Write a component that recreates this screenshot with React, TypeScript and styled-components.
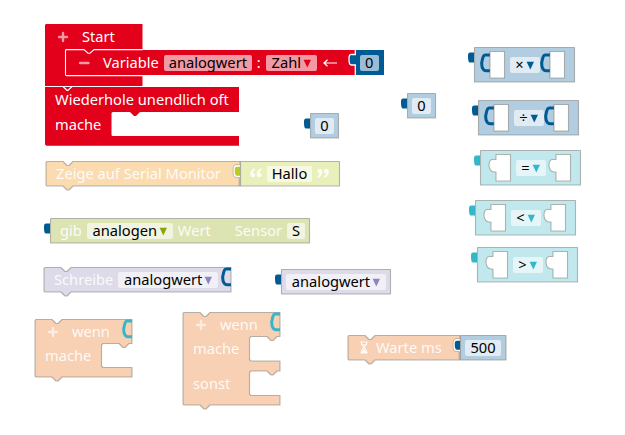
import React from 'react';
import styled, { createGlobalStyle } from 'styled-components';

const color = {
  red: '#e2001a',
  number: '#005a94',
  numberSoft: '#b2cce0',
  logic: '#33b8ca',
  logicSoft: '#c1e9ed',
  lime: '#bacc1e',
  action: '#fbdcb1',
  text: '#eaf0bc',
  sensor: '#dde4b3',
  variable: '#dddae9',
  control: '#f8d0b4',
};

const Global = createGlobalStyle`
  body { margin: 0; background: #fff; }
`;

const Canvas = styled.main`
  position: relative;
  width: 625px;
  height: 435px;
  overflow: hidden;
  background: #fff;
  font-family: 'Noto Sans', sans-serif;
  font-size: 14.67px;
  line-height: 20px;
`;

const BlockBox = styled.section<{ $x: number; $y: number }>`
  position: absolute;
  left: ${p => p.$x}px;
  top: ${p => p.$y}px;
`;

const Silhouette = styled.svg`
  position: absolute;
  left: 0;
  top: 0;
  width: 1px;
  height: 1px;
  overflow: visible;
`;

const Row = styled.div<{ $h?: number; $top?: number }>`
  position: relative;
  display: flex;
  align-items: center;
  height: ${p => p.$h ?? 25}px;
  margin-top: ${p => p.$top ?? 0}px;
  white-space: nowrap;
`;

const Label = styled.span<{ $gap?: number; $faded?: boolean }>`
  margin-left: ${p => p.$gap ?? 10}px;
  padding-bottom: 2px;
  color: ${p => (p.$faded ? 'rgba(255,255,255,.9)' : '#fff')};
`;

const Field = styled.span<{ $gap?: number; $w: number }>`
  display: flex;
  align-items: center;
  justify-content: center;
  gap: 2px;
  flex: none;
  box-sizing: border-box;
  width: ${p => p.$w}px;
  height: 16px;
  margin-left: ${p => p.$gap ?? 5}px;
  border-radius: 2px;
  background: rgba(255, 255, 255, 0.6);
  color: #000;
`;

const FieldText = styled.span`
  padding-bottom: 2px;
`;

const Glyph = styled.svg<{ $gap?: number }>`
  flex: none;
  margin-left: ${p => p.$gap ?? 0}px;
  overflow: visible;
`;

const Caret = ({ fill }: { fill: string }) => (
  <Glyph width="8" height="8" fill={fill}><path d="M.6 .8h7.400L4.300 8.600z" /></Glyph>
);
const Plus = ({ gap }: { gap: number }) => (
  <Glyph $gap={gap} width="10" height="10" stroke="#fff" strokeOpacity=".6" strokeWidth="2.4" strokeLinecap="round">
    <path d="M1 5h8M5 1v8" />
  </Glyph>
);
const Minus = ({ gap }: { gap: number }) => (
  <Glyph $gap={gap} width="10" height="10" stroke="#fff" strokeOpacity=".6" strokeWidth="2.4" strokeLinecap="round">
    <path d="M1 5h8.500" />
  </Glyph>
);
const Arrow = ({ gap }: { gap: number }) => (
  <Glyph $gap={gap} width="14" height="8" fill="none" stroke="#fff" strokeWidth="1.2">
    <path d="M14 4H1M4.5 .8L1 4l3.5 3.2" />
  </Glyph>
);
const Quote = ({ gap, closing }: { gap: number; closing?: boolean }) => (
  <Glyph $gap={gap} width="12" height="16" fill="#fff" fillOpacity=".85">
    <g transform={closing ? 'rotate(180 6 7)' : undefined}>
      <path d="M4.8 2.2C2.2 2.8 .2 5.2 .2 8.1c0 2 1 3.2 2.6 3.2 1.3 0 2.3-.9 2.3-2.2S4.200 7 3 6.900c.1-1.600 1-2.800 2.300-3.500z" />
      <path d="M11.300 2.200C8.700 2.800 6.700 5.200 6.700 8.100c0 2 1 3.200 2.600 3.200 1.300 0 2.300-.9 2.300-2.200S10.700 7 9.500 6.900c.1-1.600 1-2.800 2.300-3.500z" />
    </g>
  </Glyph>
);
const Hourglass = ({ gap }: { gap: number }) => (
  <Glyph $gap={gap} width="8" height="13" fill="none" stroke="#fff" strokeOpacity=".85" strokeWidth="1.2">
    <path d="M.3 1h7.400M.3 12h7.400M1.500 1v2.200L4 6.500 6.500 3.200V1M1.500 12V9.800L4 6.500l2.500 3.300V12" />
    <path d="M2 11.500h4L4 9z M2.600 3.700h2.800" fill="#fff" />
  </Glyph>
);

const NOTCH = 'H17l4 4h2l4 -4';
const TAB = 'H27l-4 4h-2l-4 -4';

const Tab = ({ fill }: { fill: string }) => (
  <path fill={fill} d="M0 5.500H-3.500Q-6 5 -6 8V10Q-6 15.500 -4 15.500H0z" />
);
const Hook = ({ x, stroke, y = 0 }: { x: number; y?: number; stroke: string }) => (
  <path transform={`translate(${x} ${y})`} d="M0 2H-4.500C-6.500 2 -6.300 2.600 -7.400 5.500C-9.400 11.500 -8.200 17.700 -3.500 17.700H0" fill="none" stroke={stroke} strokeWidth="3" />
);
const Outline = ({ d, fill }: { d: string; fill: string }) => (
  <path d={d} fill={fill} fillRule="evenodd" stroke="#7d7d78" strokeOpacity=".55" strokeWidth="1.100" strokeLinejoin="round" />
);

type ValueProps = { x: number; y: number; w: number; h?: number; fill: string; tab?: string; children: React.ReactNode };
const ValueBlock = ({ x, y, w, h = 25, fill, tab, children }: ValueProps) => (
  <BlockBox $x={x} $y={y}>
    <Silhouette>
      {tab && <Tab fill={tab} />}
      <Outline fill={fill} d={`M.5 .5H${w - 0.5}V${h}H.5z`} />
    </Silhouette>
    <Row $h={h}>{children}</Row>
  </BlockBox>
);

const OperatorBlock = ({ x, y, sign, logic }: { x: number; y: number; sign: string; logic?: boolean }) => {
  const strong = logic ? color.logic : color.number;
  const socket = (left: number) =>
    logic
      ? `M${left} 4.500h14.500v26.500h-14.500v-9C${left - 8.5} 23 ${left - 8.5} 10 ${left - 4} 9.500H${left}z`
      : `M${left} 4.500h14.500v26.500h-14.500z`;
  return (
    <BlockBox $x={x} $y={y}>
      <Silhouette>
        <Tab fill={strong} />
        <Outline fill={logic ? color.logicSoft : color.numberSoft} d="M.5 .5H100.500V35H.5z" />
        {[16, 76].map(left => (
          <React.Fragment key={left}>
            {!logic && <Hook x={left} y={6} stroke={strong} />}
            <Outline fill="#fff" d={socket(left)} />
          </React.Fragment>
        ))}
      </Silhouette>
      <Row $h={35}>
        <Field $gap={35.5} $w={30}><FieldText>{sign}</FieldText><Caret fill={strong} /></Field>
      </Row>
    </BlockBox>
  );
};

export default function App() {
  return (
    <>
      <Global />
      <Canvas>
        <BlockBox $x={45} $y={24}>
          <Silhouette>
            <path fill={color.red} d="M1 0H97.500V62H0V1z" />
          </Silhouette>
          <Row $h={26}><Plus gap={13} /><Label $gap={14}>Start</Label></Row>
        </BlockBox>

        <BlockBox $x={66} $y={50}>
          <Silhouette>
            <path fill={color.red} d="M0 0H290V25H0z" />
            <path fill="none" stroke="#fff" strokeWidth="1.100" d="M77 25.600H.5Q-.5 25.600 -.5 24.500V.5Q-.5 -.4 .5 -.4H18l4 3.600h2l4 -3.600H77" />
            <path fill={color.number} stroke="#fff" strokeWidth="1.300" d="M289.300 -.5V4.500H286Q283 4 283 8V10Q283 15 285.500 15H289.300V25.500" />
            <path fill={color.number} d="M290 0H318V25H290z" />
          </Silhouette>
          <Row>
            <Minus gap={13} />
            <Label $gap={14}>Variable</Label>
            <Field $w={88}><FieldText>analogwert</FieldText></Field>
            <Label $gap={5}>:</Label>
            <Field $w={51}><FieldText>Zahl</FieldText><Caret fill={color.red} /></Field>
            <Arrow gap={6} />
            <Field $gap={23} $w={19}><FieldText>0</FieldText></Field>
          </Row>
        </BlockBox>

        <BlockBox $x={45} $y={87}>
          <Silhouette>
            <path fill={color.red} d="M0 0H194V25H95l-4 4h-2l-4 -4H68Q66.500 25 66.500 26.500V47.500Q66.500 49 68 49H194V58.700H1.500L0 57.500z" />
            <path fill="none" stroke="#fff" strokeWidth="1.200" d="M0 -.5H18l4 3.800h1l4 -3.800H97.500" />
          </Silhouette>
          <Row $h={25}><Label>Wiederhole unendlich oft</Label></Row>
          <Row $h={25}><Label>mache</Label></Row>
        </BlockBox>

        <ValueBlock x={310} y={113} w={29} fill={color.numberSoft} tab={color.number}><Field $w={19}><FieldText>0</FieldText></Field></ValueBlock>
        <ValueBlock x={407} y={93} w={29} fill={color.numberSoft} tab={color.number}><Field $w={19}><FieldText>0</FieldText></Field></ValueBlock>

        <BlockBox $x={46} $y={161}>
          <Silhouette>
            <Outline fill={color.action} d={`M1 .5${NOTCH}H194V25${TAB}H1L0 24V1.500z`} />
            <path fill={color.lime} stroke="#fff" strokeWidth="1.500" d="M194 5H191Q188 5 188 8V10Q188 15.500 191 15.500H194" />
            <path fill="none" stroke="#888" strokeOpacity=".6" strokeWidth=".7" d="M193 3.500H190Q187 4 187 8V10Q187 16.500 190 16.500H193V25" />
          </Silhouette>
          <Row><Label $faded>Zeige auf Serial Monitor</Label></Row>
        </BlockBox>
        <ValueBlock x={240} y={161} w={100} fill={color.text}>
          <Quote gap={10} />
          <Field $w={45}><FieldText>Hallo</FieldText></Field>
          <Quote gap={5} closing />
        </ValueBlock>

        <ValueBlock x={50} y={218} w={260} fill={color.sensor} tab={color.number}>
          <Label $faded>gib</Label>
          <Field $w={86}><FieldText>analogen</FieldText><Caret fill="#8fa402" /></Field>
          <Label $gap={5} $faded>Wert</Label>
          <Label $gap={24} $faded>Sensor</Label>
          <Field $w={18}><FieldText>S</FieldText></Field>
        </ValueBlock>

        <BlockBox $x={44} $y={267}>
          <Silhouette>
            <Outline fill={color.variable} d={`M1 .5${NOTCH}H187V25${TAB}H1L0 24V1.500z`} />
            <Hook x={187} stroke={color.number} />
          </Silhouette>
          <Row><Label $faded>Schreibe</Label><Field $w={100}><FieldText>analogwert</FieldText><Caret fill="#9085ba" /></Field></Row>
        </BlockBox>
        <ValueBlock x={281} y={269} w={110} fill={color.variable} tab={color.number}>
          <Field $w={100}><FieldText>analogwert</FieldText><Caret fill="#9085ba" /></Field>
        </ValueBlock>

        <BlockBox $x={35} $y={319}>
          <Silhouette>
            <Outline fill={color.control} d={`M1 .5${NOTCH}H97V24.500H94l-4 4h-2l-4 -4H68L66.500 26V47L68 48.500H97V58${TAB}H1L0 57V1.500z`} />
            <Hook x={97} stroke={color.logic} />
          </Silhouette>
          <Row><Plus gap={13} /><Label $gap={14} $faded>wenn</Label></Row>
          <Row $h={24}><Label $faded>mache</Label></Row>
        </BlockBox>

        <BlockBox $x={183} $y={312}>
          <Silhouette>
            <Outline fill={color.control} d={`M1 .5${NOTCH}H97V24.500H94l-4 4h-2l-4 -4H68L66.500 26V47.500L68 49H97V59H94l-4 4h-2l-4 -4H68L66.500 60.500V82L68 83.500H97V93${TAB}H1L0 92V1.500z`} />
            <Hook x={97} stroke={color.logic} />
          </Silhouette>
          <Row><Plus gap={13} /><Label $gap={14} $faded>wenn</Label></Row>
          <Row $h={24}><Label $faded>mache</Label></Row>
          <Row $h={24} $top={11}><Label $faded>sonst</Label></Row>
        </BlockBox>

        <BlockBox $x={348} $y={335}>
          <Silhouette>
            <Outline fill={color.control} d={`M1 .5${NOTCH}H112V25${TAB}H1L0 24V1.500z`} />
            <path fill={color.number} stroke="#fff" strokeWidth="1.500" d="M112 5H109Q106 5 106 8V10Q106 15.500 109 15.500H112" />
            <path fill="none" stroke="#888" strokeOpacity=".6" strokeWidth=".7" d="M111 3.500H108Q105 4 105 8V10Q105 16.500 108 16.500H111V25" />
          </Silhouette>
          <Row><Hourglass gap={12} /><Label $gap={8} $faded>Warte ms</Label></Row>
        </BlockBox>
        <ValueBlock x={460} y={335} w={46.5} fill={color.numberSoft}><Field $w={36}><FieldText>500</FieldText></Field></ValueBlock>

        <OperatorBlock x={474} y={47} sign="×" />
        <OperatorBlock x={478} y={100} sign="÷" />
        <OperatorBlock x={480} y={150} sign="=" logic />
        <OperatorBlock x={475} y={200} sign="<" logic />
        <OperatorBlock x={477} y={247} sign=">" logic />
      </Canvas>
    </>
  );
}
